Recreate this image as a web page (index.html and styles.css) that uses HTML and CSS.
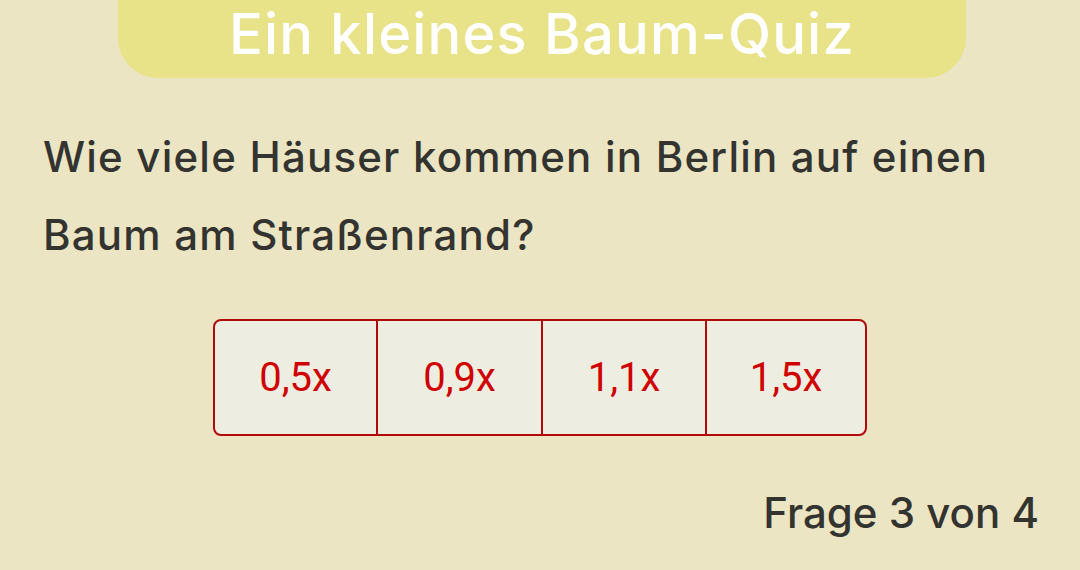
FILE: index.html
```html
<!DOCTYPE html>
<html lang="de">
<head>
  <meta charset="UTF-8" />
  <meta name="viewport" content="width=device-width, initial-scale=1" />
  <title>Ein kleines Baum-Quiz</title>
  <link rel="stylesheet" href="styles.css">
</head>
<body>
  <main class="quiz" role="main" aria-label="Baum-Quiz">
    <header class="banner">
      <h1>Ein kleines Baum-Quiz</h1>
    </header>
    <p class="question">Wie viele Häuser kommen in Berlin auf einen Baum am Straßenrand?</p>
    <div class="answers" role="group" aria-label="Antworten">
      <button type="button" class="answer">0,5x</button>
      <button type="button" class="answer">0,9x</button>
      <button type="button" class="answer">1,1x</button>
      <button type="button" class="answer">1,5x</button>
    </div>
    <footer class="progress">Frage 3 von 4</footer>
  </main>
</body>
</html>
```

FILE: styles.css
```css
:root {
  --color-bg: #ebe5c3;
  --color-banner: #e8e288;
  --color-text: #333330;
  --color-answer-bg: #eeede2;
  --color-answer-border: #b00a0a;
  --color-answer-text: #d00000;
  --font-main: Inter, 'Open Sans', sans-serif;
}

* {
  box-sizing: border-box;
}

body {
  margin: 0;
  background-color: var(--color-bg);
  color: var(--color-text);
  font-family: var(--font-main);
  height: 570px;
  overflow: hidden;
}

.quiz {
  display: flex;
  flex-direction: column;
  width: 1080px;
  height: 570px;
}

.banner {
  width: 848px;
  height: 78px;
  margin: 0 auto 0 118px;
  background-color: var(--color-banner);
  border-radius: 0 0 40px 40px;
  display: flex;
  justify-content: center;
  align-items: flex-start;
}

.banner h1 {
  margin: 0;
  color: #ffffff;
  font-weight: 500;
  font-size: 56px;
  line-height: 68px;
  letter-spacing: 1.2px;
}

.question {
  margin: 40px 0 0 43px;
  font-size: 42px;
  font-weight: 500;
  line-height: 78px;
  letter-spacing: 1.2px;
  width: 1020px;
}

.answers {
  display: flex;
  align-self: center;
  margin: 45px 0 0 0;
  border: 2px solid var(--color-answer-border);
  border-radius: 8px;
  overflow: hidden;
  background-color: var(--color-answer-bg);
}

.answer {
  width: 163px;
  height: 113px;
  border: none;
  border-left: 2px solid var(--color-answer-border);
  background: none;
  color: var(--color-answer-text);
  font-family: Roboto, sans-serif;
  font-size: 40px;
  padding: 0;
  cursor: pointer;
}

.answer:first-child {
  border-left: none;
  width: 161px;
}

.answer:nth-child(2) {
  width: 165px;
}

.answer:nth-child(3) {
  width: 164px;
}

.answer:last-child {
  width: 160px;
}

.progress {
  margin: 49px 41px 0 0;
  align-self: flex-end;
  font-size: 42px;
  font-weight: 500;
  line-height: 56px;
}
```
